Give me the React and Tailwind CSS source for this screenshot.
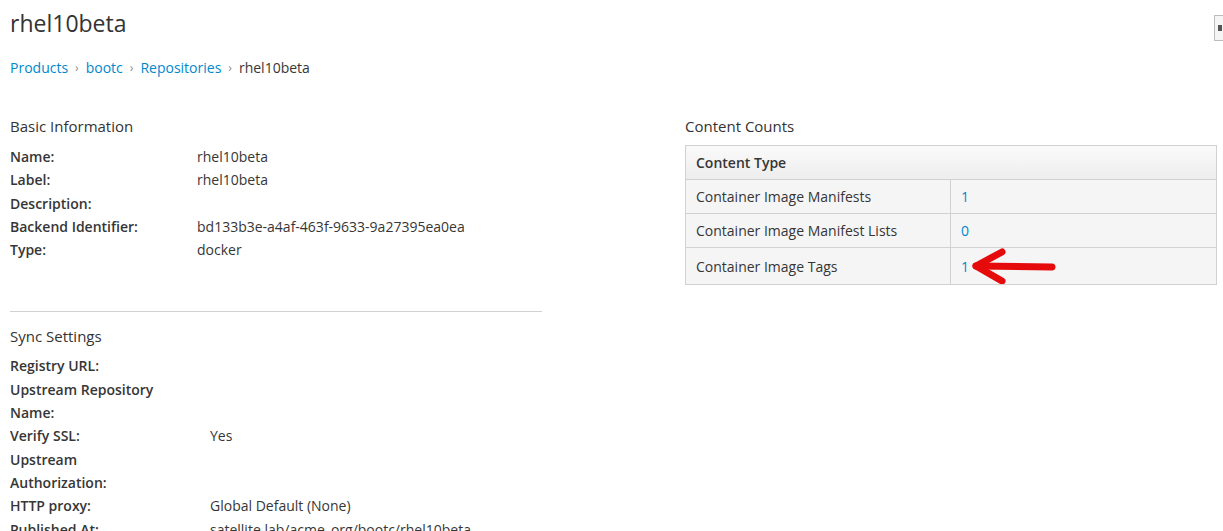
const basicInfo = [
  ['Name:', 'rhel10beta'],
  ['Label:', 'rhel10beta'],
  ['Description:', ''],
  ['Backend Identifier:', 'bd133b3e-a4af-463f-9633-9a27395ea0ea'],
  ['Type:', 'docker'],
];

const syncSettings = [
  ['Registry URL:', ''],
  ['Upstream Repository Name:', ''],
  ['Verify SSL:', 'Yes'],
  ['Upstream Authorization:', ''],
  ['HTTP proxy:', 'Global Default (None)'],
  ['Published At:', 'satellite.lab/acme_org/bootc/rhel10beta'],
];

const counts = [
  ['Container Image Manifests', '1'],
  ['Container Image Manifest Lists', '0'],
  ['Container Image Tags', '1'],
];

const Arrow = () => (
  <svg width="90" height="36" viewBox="0 0 90 36" className="ml-[1px]">
    <g stroke="#e60b0b" strokeWidth="7" strokeLinecap="round" strokeLinejoin="round" fill="none">
      <path d="M82 19 L6 18" />
      <path d="M32 4 L6 18 L32 33" />
    </g>
  </svg>
);

const App = () => {
  return (
    <div className="w-[1223px] h-[531px] overflow-hidden bg-white text-[#363636] font-['Open_Sans',sans-serif] text-[14px]">
      {/* Title */}
      <div className="flex items-start justify-between pl-[10px] pt-[6px]">
        <h1 className="text-[23px] leading-[34px] text-[#333]">rhel10beta</h1>
        <div className="mt-[9px] w-[9px] h-[26px] border border-r-0 border-[#bbb] bg-[#f5f5f5] rounded-l-[1px] flex items-center pl-[3px] overflow-hidden">
          <span className="w-[4px] h-[6px] bg-[#555]" />
        </div>
      </div>

      {/* Breadcrumb */}
      <div className="flex items-center pl-[10px] mt-[17px] text-[14px] leading-[20px]">
        <a className="text-[#0088ce]">Products</a>
        <span className="mx-[7px] text-[#8b8d8f] text-[12px]">›</span>
        <a className="text-[#0088ce]">bootc</a>
        <span className="mx-[7px] text-[#8b8d8f] text-[12px]">›</span>
        <a className="text-[#0088ce]">Repositories</a>
        <span className="mx-[7px] text-[#8b8d8f] text-[12px]">›</span>
        <span className="text-[#363636]">rhel10beta</span>
      </div>

      <div className="flex mt-[37px]">
        {/* Left column */}
        <div className="w-[532px] ml-[10px]">
          <h2 className="text-[15px] leading-[22px] text-[#333]">Basic Information</h2>
          <div className="mt-[8px]">
            {basicInfo.map(([label, value]) => (
              <div key={label} className="grid grid-cols-[187px_1fr] leading-[23.3px]">
                <span className="font-semibold">{label}</span>
                <span>{value}</span>
              </div>
            ))}
          </div>

          <div className="mt-[50px] border-t border-[#d1d1d1]" />

          <h2 className="mt-[13px] text-[15px] leading-[22px] text-[#333]">Sync Settings</h2>
          <div className="mt-[7px]">
            {syncSettings.map(([label, value]) => (
              <div key={label} className="grid grid-cols-[200px_1fr] leading-[23.3px]">
                <span className="font-semibold pr-[45px]">{label}</span>
                <span className="whitespace-nowrap">{value}</span>
              </div>
            ))}
          </div>
        </div>

        {/* Right column */}
        <div className="w-[532px] ml-[143px]">
          <h2 className="text-[15px] leading-[22px] text-[#333]">Content Counts</h2>
          <table className="mt-[8px] w-full border-collapse border border-[#d1d1d1] text-[14px]">
            <thead>
              <tr className="bg-gradient-to-b from-[#fafafa] to-[#ededed]">
                <th colSpan={2} className="h-[34px] px-[10px] text-left font-semibold border-b border-[#d1d1d1]">
                  Content Type
                </th>
              </tr>
            </thead>
            <tbody>
              {counts.map(([type, count], i) => (
                <tr key={type} className="bg-[#f5f5f5]">
                  <td className="w-[265px] h-[34px] px-[10px] border-t border-r border-[#d1d1d1]">{type}</td>
                  <td className="px-[10px] border-t border-[#d1d1d1]">
                    <div className="flex items-center">
                      <a className="text-[#0088ce]">{count}</a>
                      {i === 2 && <Arrow />}
                    </div>
                  </td>
                </tr>
              ))}
            </tbody>
          </table>
        </div>
      </div>
    </div>
  );
};

export default App;
